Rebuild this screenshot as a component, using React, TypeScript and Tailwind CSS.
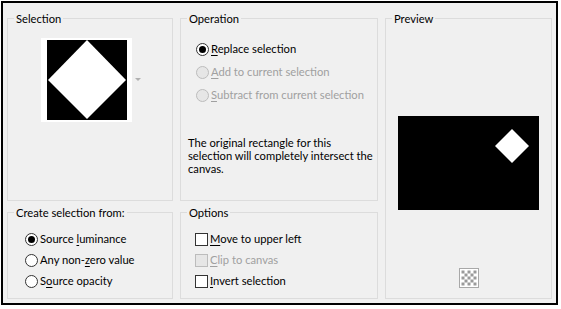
import React from "react";

const font = { fontFamily: 'Lato, "Segoe UI", sans-serif' };

type GroupProps = {
  label: string;
  className?: string;
  children?: React.ReactNode;
};

const Group = ({ label, className = "", children }: GroupProps) => (
  <div className={`border border-[#dcdcdc] flex flex-col ${className}`}>
    <span className="self-start ml-[6px] px-[2px] -mt-[8px] bg-[#f0f0f0] leading-[15px] whitespace-nowrap">{label}</span>
    {children}
  </div>
);

const Radio = ({ checked = false, disabled = false }: { checked?: boolean; disabled?: boolean }) => (
  <span
    className={`w-[13px] h-[13px] rounded-full border flex items-center justify-center shrink-0 ${
      disabled ? "border-[#bcbcbc] bg-[#e6e6e6]" : "border-[#333333] bg-white"
    }`}
  >
    {checked && <span className="w-[7px] h-[7px] rounded-full bg-black" />}
  </span>
);

const Check = ({ disabled = false }: { disabled?: boolean }) => (
  <span
    className={`w-[13px] h-[13px] border shrink-0 ${
      disabled ? "border-[#bcbcbc] bg-[#e6e6e6]" : "border-[#333333] bg-white"
    }`}
  />
);

const Key = ({ children }: { children: React.ReactNode }) => <span className="underline underline-offset-2">{children}</span>;

const App = () => {
  return (
    <div className="w-[561px] h-[309px] bg-white pl-[1px] pt-[1px] text-[11.2px] text-black" style={font}>
      <div className="w-[557px] h-[304px] border-2 border-black bg-[#f0f0f0] pl-[4px] pt-[15px]">
        <div className="grid grid-cols-[166px_198px_167px] grid-rows-[183px_87px] gap-x-[7px] gap-y-[11px]">
          <Group label="Selection">
            <div className="flex items-center mt-[12px] ml-[33px]">
              <div className="w-[91px] h-[84px] bg-white flex items-center justify-center">
                <div className="w-[80px] h-[80px] bg-black">
                  <svg width="80" height="80" viewBox="0 0 80 80">
                    <polygon points="40,0 79,40 40,79 1,40" fill="#ffffff" />
                  </svg>
                </div>
              </div>
              <svg width="6" height="4" viewBox="0 0 6 4" className="ml-[3px]">
                <polygon points="0,0 6,0 3,3" fill="#b0b0b0" />
              </svg>
            </div>
          </Group>

          <Group label="Operation">
            <div className="flex flex-col mt-[12px] pl-[15px] whitespace-nowrap">
              <div className="h-[23px] flex items-center gap-[2px]">
                <Radio checked />
                <span><Key>R</Key>eplace selection</span>
              </div>
              <div className="h-[23px] flex items-center gap-[2px] text-[#a0a0a0]">
                <Radio disabled />
                <span><Key>A</Key>dd to current selection</span>
              </div>
              <div className="h-[23px] flex items-center gap-[2px] text-[#a0a0a0]">
                <Radio disabled />
                <span><Key>S</Key>ubtract from current selection</span>
              </div>
            </div>
            <p className="mt-[29px] ml-[7px] leading-[13px] w-[185px]">
              The original rectangle for this selection will completely intersect the canvas.
            </p>
          </Group>

          <Group label="Preview" className="row-span-2 items-center">
            <div className="mt-[90px] w-[141px] h-[94px] bg-black">
              <svg width="141" height="94" viewBox="0 0 141 94">
                <polygon points="114,13 131,30 114,47 97,30" fill="#ffffff" />
              </svg>
            </div>
            <svg width="20" height="20" viewBox="0 0 20 20" className="mt-[58px]">
              <rect x="0.5" y="0.5" width="19" height="19" fill="#ffffff" stroke="#a8a8a8" />
              {[0, 1, 2, 3, 4].map((r) =>
                [0, 1, 2, 3, 4].map((c) =>
                  (r + c) % 2 === 0 ? (
                    <rect key={`${r}-${c}`} x={2.5 + c * 3} y={2.5 + r * 3} width="3" height="3" fill="#9a9a9a" />
                  ) : null
                )
              )}
            </svg>
          </Group>

          <Group label="Create selection from:">
            <div className="flex flex-col mt-[9px] pl-[17px] whitespace-nowrap">
              <div className="h-[21px] flex items-center gap-[2px]">
                <Radio checked />
                <span>Source <Key>l</Key>uminance</span>
              </div>
              <div className="h-[21px] flex items-center gap-[2px]">
                <Radio />
                <span>Any non-<Key>z</Key>ero value</span>
              </div>
              <div className="h-[21px] flex items-center gap-[2px]">
                <Radio />
                <span>S<Key>o</Key>urce opacity</span>
              </div>
            </div>
          </Group>

          <Group label="Options">
            <div className="flex flex-col mt-[9px] pl-[14px] whitespace-nowrap">
              <div className="h-[21px] flex items-center gap-[2px]">
                <Check />
                <span><Key>M</Key>ove to upper left</span>
              </div>
              <div className="h-[21px] flex items-center gap-[2px] text-[#a0a0a0]">
                <Check disabled />
                <span><Key>C</Key>lip to canvas</span>
              </div>
              <div className="h-[21px] flex items-center gap-[2px]">
                <Check />
                <span><Key>I</Key>nvert selection</span>
              </div>
            </div>
          </Group>
        </div>
      </div>
    </div>
  );
};

export default App;
